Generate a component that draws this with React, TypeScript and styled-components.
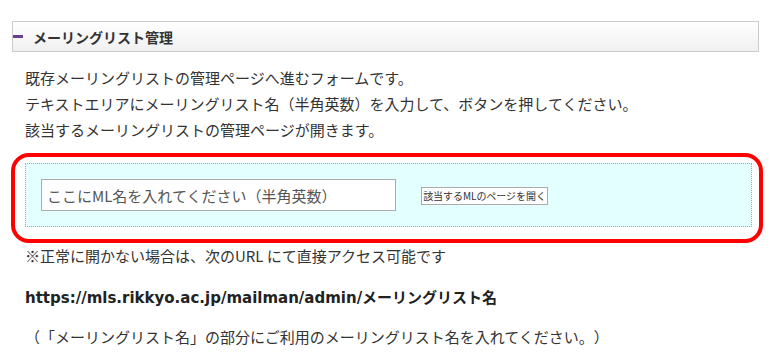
import { styled, createGlobalStyle } from "styled-components";

const GlobalStyle = createGlobalStyle`
  body {
    margin: 0;
    background: #ffffff;
    font-family: "Noto Sans CJK JP", "Noto Sans", sans-serif;
    color: #333333;
    text-spacing-trim: space-all;
  }
`;

const Page = styled.div`
  width: 774px;
  height: 360px;
  overflow: hidden;
  padding: 21px 15px 0 12px;
  box-sizing: border-box;
`;

const SectionHeader = styled.h2`
  margin: 0;
  height: 31px;
  box-sizing: border-box;
  border: 1px solid #cccccc;
  background: linear-gradient(#ffffff, #f0f0f0);
  display: flex;
  align-items: center;
  font-size: 14px;
  font-weight: bold;
  color: #333333;
`;

const Marker = styled.span`
  width: 10px;
  height: 3px;
  background: #6a3f91;
  margin-right: 10px;
`;

const Text = styled.p<{ $top?: number; $bold?: boolean }>`
  margin: ${(p) => p.$top ?? 0}px 0 0;
  padding-left: 13px;
  font-size: 15px;
  line-height: 26px;
  font-weight: ${(p) => (p.$bold ? "bold" : "normal")};
  color: #333333;
`;

const UrlText = styled(Text)`
  font-family: "DejaVu Sans", "Noto Sans CJK JP", sans-serif;
  color: #222222;
`;

const Highlight = styled.div`
  margin: 10px -4px 0 -1px;
  border: 4px solid #ff0000;
  border-radius: 18px;
  padding: 6px 7px 12px 10px;
`;

const FormBox = styled.form`
  height: 64px;
  box-sizing: border-box;
  border: 1px dotted #5bbfd6;
  background: #e4ffff;
  display: flex;
  align-items: center;
  gap: 25px;
  padding: 0 15px;
`;

const NameInput = styled.input`
  width: 355px;
  height: 32px;
  box-sizing: border-box;
  border: 1px solid #aaaaaa;
  background: #ffffff;
  padding: 0 5px;
  font-family: inherit;
  font-size: 15px;
  color: #333333;
  outline: none;

  &::placeholder {
    color: #555555;
  }
`;

const OpenButton = styled.button`
  height: 18px;
  width: 127px;
  box-sizing: border-box;
  border: 1px solid #aaaaaa;
  background: #ffffff;
  padding: 0;
  font-family: inherit;
  font-size: 10px;
  line-height: 16px;
  letter-spacing: -0.05px;
  color: #333333;
  white-space: nowrap;
  margin-top: 2px;
`;

export default function App() {
  return (
    <Page>
      <GlobalStyle />
      <SectionHeader>
        <Marker />
        メーリングリスト管理
      </SectionHeader>
      <Text $top={13}>
        既存メーリングリストの管理ページへ進むフォームです。
        <br />
        テキストエリアにメーリングリスト名（半角英数）を入力して、ボタンを押してください。
        <br />
        該当するメーリングリストの管理ページが開きます。
      </Text>
      <Highlight>
        <FormBox onSubmit={(e) => e.preventDefault()}>
          <NameInput type="text" placeholder="ここにML名を入れてください（半角英数）" />
          <OpenButton type="submit">該当するMLのページを開く</OpenButton>
        </FormBox>
      </Highlight>
      <Text>※正常に開かない場合は、次のURL にて直接アクセス可能です</Text>
      <UrlText $top={16} $bold>
        https://mls.rikkyo.ac.jp/mailman/admin/メーリングリスト名
      </UrlText>
      <Text $top={13}>
        （「メーリングリスト名」の部分にご利用のメーリングリスト名を入れてください。）
      </Text>
    </Page>
  );
}
